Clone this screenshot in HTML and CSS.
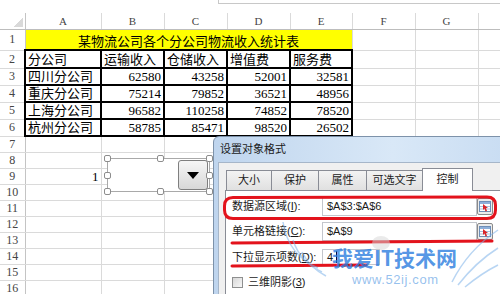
FILE: index.html
```html
<!DOCTYPE html>
<html lang="zh-CN">
<head>
    <meta charset="UTF-8" />
    <meta name="viewport" content="width=device-width, initial-scale=1.0" />
    <title>设置对象格式 - 控制</title>
    <link rel="stylesheet" href="styles.css">
</head>
<body>
<div class="page">
    <!-- FORMULA BAR EDGE -->
    <div class="topbar"><div class="fx-edge"></div></div>

    <!-- WORKSHEET -->
    <table class="grid">
        <colgroup>
            <col class="w-hd"><col class="w-a"><col class="w-n"><col class="w-n"><col class="w-n">
            <col class="w-e"><col class="w-n"><col class="w-n"><col class="w-n">
        </colgroup>
        <tr class="hd">
            <th class="corner"></th><th>A</th><th>B</th><th>C</th><th>D</th><th>E</th><th>F</th><th>G</th><th></th>
        </tr>
        <tr class="h21">
            <th>1</th><td colspan="5" class="title">某物流公司各个分公司物流收入统计表</td><td></td><td></td><td></td>
        </tr>
        <tr class="h18">
            <th>2</th><td class="t">分公司</td><td class="t">运输收入</td><td class="t">仓储收入</td><td class="t">增值费</td><td class="t">服务费</td><td></td><td></td><td></td>
        </tr>
        <tr class="h17">
            <th>3</th><td class="t">四川分公司</td><td class="t num">62580</td><td class="t num">43258</td><td class="t num">52001</td><td class="t num">32581</td><td></td><td></td><td></td>
        </tr>
        <tr class="h16">
            <th>4</th><td class="t">重庆分公司</td><td class="t num">75214</td><td class="t num">79852</td><td class="t num">36521</td><td class="t num">48956</td><td></td><td></td><td></td>
        </tr>
        <tr class="h17">
            <th>5</th><td class="t">上海分公司</td><td class="t num">96582</td><td class="t num">110258</td><td class="t num">74852</td><td class="t num">78520</td><td></td><td></td><td></td>
        </tr>
        <tr class="h16">
            <th>6</th><td class="t">杭州分公司</td><td class="t num">58785</td><td class="t num">85471</td><td class="t num">98520</td><td class="t num">26502</td><td></td><td></td><td></td>
        </tr>
        <tr class="h16"><th>7</th><td></td><td></td><td></td><td></td><td></td><td></td><td></td><td></td></tr>
        <tr class="h16"><th>8</th><td></td><td></td><td></td><td></td><td></td><td></td><td></td><td></td></tr>
        <tr class="h16"><th>9</th><td class="num">1</td><td></td><td></td><td></td><td></td><td></td><td></td><td></td></tr>
        <tr class="h16"><th>10</th><td></td><td></td><td></td><td></td><td></td><td></td><td></td><td></td></tr>
        <tr class="h16"><th>11</th><td></td><td></td><td></td><td></td><td></td><td></td><td></td><td></td></tr>
        <tr class="h16"><th>12</th><td></td><td></td><td></td><td></td><td></td><td></td><td></td><td></td></tr>
        <tr class="h16"><th>13</th><td></td><td></td><td></td><td></td><td></td><td></td><td></td><td></td></tr>
        <tr class="h16"><th>14</th><td></td><td></td><td></td><td></td><td></td><td></td><td></td><td></td></tr>
        <tr class="h16"><th>15</th><td></td><td></td><td></td><td></td><td></td><td></td><td></td><td></td></tr>
        <tr class="h16"><th>16</th><td></td><td></td><td></td><td></td><td></td><td></td><td></td><td></td></tr>
    </table>

    <!-- COMBO BOX FORM CONTROL (selected) -->
    <div class="combo">
        <span class="handle h-tl"></span><span class="handle h-tm"></span><span class="handle h-tr"></span>
        <span class="handle h-ml"></span><span class="handle h-mr"></span>
        <span class="handle h-bl"></span><span class="handle h-bm"></span><span class="handle h-br"></span>
        <div class="drop"><span class="tri"></span></div>
    </div>

    <!-- FORMAT CONTROL DIALOG -->
    <div class="dialog">
        <div class="dlg-title">设置对象格式</div>
        <div class="dlg-body">
            <div class="tabs">
                <div class="tab t-size">大小</div>
                <div class="tab t-prot">保护</div>
                <div class="tab t-attr">属性</div>
                <div class="tab t-alt">可选文字</div>
                <div class="tab t-ctrl on">控制</div>
            </div>
            <div class="panel">
                <div class="field f1">
                    <span class="lbl">数据源区域(<u>I</u>):</span>
                    <div class="input wide">$A$3:$A$6</div>
                    <div class="refbtn">
                        <svg width="16" height="17" viewBox="0 0 16 17">
                            <rect x="0.5" y="0.5" width="15" height="16" rx="1.5" fill="#ececec" stroke="#8a8a8a"/>
                            <rect x="2.5" y="3.5" width="11" height="10" fill="#fff" stroke="#6f8fb8"/>
                            <rect x="3" y="4" width="10" height="2" fill="#8fb0da"/>
                            <path d="M3 8.5h10M3 11h10" stroke="#a9c0de"/>
                            <path d="M6 6l5 4h-2l1 3-1.5.6-1-3-1.5 1.4z" fill="#d9262b"/>
                        </svg>
                    </div>
                </div>
                <div class="field f2">
                    <span class="lbl">单元格链接(<u>C</u>):</span>
                    <div class="input wide">$A$9</div>
                    <div class="refbtn">
                        <svg width="16" height="17" viewBox="0 0 16 17">
                            <rect x="0.5" y="0.5" width="15" height="16" rx="1.5" fill="#ececec" stroke="#8a8a8a"/>
                            <rect x="2.5" y="3.5" width="11" height="10" fill="#fff" stroke="#6f8fb8"/>
                            <rect x="3" y="4" width="10" height="2" fill="#8fb0da"/>
                            <path d="M3 8.5h10M3 11h10" stroke="#a9c0de"/>
                            <path d="M6 6l5 4h-2l1 3-1.5.6-1-3-1.5 1.4z" fill="#d9262b"/>
                        </svg>
                    </div>
                </div>
                <div class="field f3">
                    <span class="lbl">下拉显示项数(<u>D</u>):</span>
                    <div class="input short">4<span class="caret"></span></div>
                </div>
                <div class="check"><span class="cb"></span>三维阴影(<u>3</u>)</div>
            </div>
        </div>
    </div>

    <!-- RED HAND-DRAWN MARKS AND WATERMARK WINGS -->
    <svg class="marks" width="500" height="294" viewBox="0 0 500 294">
        <g fill="none" stroke="#e3131c" stroke-width="3" stroke-linecap="round">
            <path d="M233 197.5 L487 197 Q495.5 197 495.5 205 L495.5 210 Q495.5 218.5 487 218.5 L233 218.5 Q224.5 218.5 224.5 210 L224.5 206 Q224.5 197.5 233 197.5 Z"/>
            <path d="M232 243 Q360 242.5 492 241"/>
            <path d="M232 266 Q300 265.5 366 265"/>
        </g>
        <g fill="none" stroke="#7fb4ea" stroke-width="1.5" opacity="0.55">
            <path d="M283 222 Q288 255 318 268"/>
            <path d="M293 240 Q300 262 322 272"/>
            <path d="M302 252 Q310 268 326 276"/>
            <path d="M452 282 Q468 250 498 230"/>
            <path d="M458 285 Q476 262 498 248"/>
            <path d="M465 287 Q482 273 498 265"/>
        </g>
        <ellipse cx="381" cy="243" rx="9" ry="7" fill="#d6d6d6" opacity="0.5"/>
    </svg>
    <div class="wm-title">我爱IT技术网</div>
    <div class="wm-url">www.52ij.com</div>
</div>
</body>
</html>
```

FILE: styles.css
```css
* {
box-sizing: border-box;
}

html,
body {
margin: 0;
padding: 0;
}

body {
background-color: #fff;
font-family: "Liberation Serif", "Noto Sans CJK SC", serif;
}

.page {
position: relative;
width: 500px;
height: 294px;
overflow: hidden;
}

/* FORMULA BAR EDGE */
.topbar {
height: 13px;
}

.fx-edge {
margin-left: 218px;
height: 4px;
border-left: 1px solid #c8c8c8;
border-bottom: 1px solid #c8c8c8;
}

/* WORKSHEET GRID */
.grid {
border-collapse: collapse;
table-layout: fixed;
width: 541px;
font-size: 13px;
}

.w-hd { width: 25px; }
.w-a { width: 76px; }
.w-n { width: 63px; }
.w-e { width: 62px; }

.hd { height: 16px; }
.h21 { height: 21px; }
.h18 { height: 18px; }
.h17 { height: 17px; }
.h16 { height: 16px; }

.grid td,
.grid th {
border: 1px solid #dadada;
overflow: hidden;
white-space: nowrap;
}

.grid td {
padding: 0 2px;
vertical-align: bottom;
line-height: 15px;
color: #000;
}

.grid th {
padding: 0;
font-weight: normal;
font-size: 12px;
color: #444;
text-align: center;
vertical-align: middle;
}

.hd th {
border-top: none;
border-bottom-color: #bdbdbd;
font-size: 11px;
line-height: 14px;
}

.grid tr > th:first-child {
border-left: none;
border-right-color: #c4c4c4;
}

.corner {
background: linear-gradient(to top left, #d9d9d9 50%, transparent 50%) no-repeat right 2px bottom 2px / 9px 9px;
}

.title {
background-color: #ffff00;
text-align: center;
border-right: 2px solid #000;
border-bottom: 2px solid #000;
}

.t {
border: 2px solid #000 !important;
}

.num {
text-align: right;
}

/* COMBO BOX CONTROL */
.combo {
position: absolute;
left: 107px;
top: 158px;
width: 103px;
height: 34px;
padding: 1px 1px 1px 0;
border: 1px solid #a9a9a9;
background-color: #fff;
display: flex;
justify-content: flex-end;
}

.handle {
position: absolute;
width: 7px;
height: 7px;
border: 1px solid #8d8d8d;
border-radius: 2px;
background-color: #fff;
}

.h-tl { left: -4px; top: -4px; }
.h-tm { left: 49px; top: -4px; }
.h-tr { right: -4px; top: -4px; }
.h-ml { left: -4px; top: 13px; }
.h-mr { right: -4px; top: 13px; }
.h-bl { left: -4px; bottom: -4px; }
.h-bm { left: 49px; bottom: -4px; }
.h-br { right: -4px; bottom: -4px; }

.drop {
width: 30px;
border: 1px solid #7f7f7f;
border-radius: 3px;
background: linear-gradient(#f6f6f6, #d8d8d8);
display: flex;
align-items: center;
justify-content: center;
}

.tri {
width: 0;
height: 0;
border-left: 6.5px solid transparent;
border-right: 6.5px solid transparent;
border-top: 7px solid #000;
}

/* DIALOG */
.dialog {
position: absolute;
left: 213px;
top: 136px;
width: 300px;
height: 170px;
padding-left: 4px;
border: 1px solid #7d92aa;
border-radius: 6px 6px 0 0;
background: linear-gradient(to right, #bfd5ee, #d9e8f7 60%, #c8dcf2);
display: flex;
flex-direction: column;
font-family: "Liberation Sans", "Noto Sans CJK SC", sans-serif;
font-size: 11px;
color: #1a1a1a;
}

.dlg-title {
height: 25px;
line-height: 25px;
padding-left: 2px;
}

.dlg-body {
flex: 1;
padding: 5px 0 0 6px;
border: 1px solid #a6b6c9;
background-color: #f0f0f0;
}

.tabs {
height: 22px;
margin-left: 1px;
display: flex;
align-items: flex-end;
}

.tab {
height: 20px;
line-height: 18px;
margin-right: -1px;
border: 1px solid #898c95;
border-bottom: none;
background: linear-gradient(#f3f3f3, #e0e0e0);
text-align: center;
}

.t-size { width: 46px; }
.t-prot { width: 48px; }
.t-attr { width: 49px; }
.t-alt { width: 57px; }
.t-ctrl { width: 51px; }

.tab.on {
position: relative;
z-index: 1;
height: 23px;
margin-bottom: -1px;
line-height: 21px;
background: #fff;
}

.panel {
height: 120px;
padding: 6px 0 0 6px;
border: 1px solid #898c95;
background-color: #fff;
}

.field {
display: flex;
align-items: center;
height: 19px;
}

.f1 { margin-bottom: 6px; }
.f2 { margin-bottom: 8px; }
.f3 { height: 16px; margin-bottom: 10px; }

.lbl {
width: 90px;
line-height: 15px;
}

.input {
height: 19px;
padding-left: 4px;
border: 1px solid #c3c6cc;
background-color: #fff;
line-height: 17px;
}

.input.wide { width: 155px; }

.input.short {
width: 58px;
height: 16px;
line-height: 14px;
}

.caret {
display: inline-block;
width: 1px;
height: 12px;
margin-left: 3px;
vertical-align: -2px;
background-color: #000;
}

.refbtn {
width: 16px;
height: 17px;
}

.refbtn svg {
display: block;
}

.check {
display: flex;
align-items: center;
line-height: 15px;
}

.cb {
width: 11px;
height: 11px;
margin-right: 5px;
border: 1px solid #8e8f8f;
background: linear-gradient(135deg, #d8d8d8, #f7f7f7);
}

/* OVERLAYS */
.marks {
position: absolute;
left: 0;
top: 0;
z-index: 5;
pointer-events: none;
}

.wm-title {
position: absolute;
left: 332px;
top: 246px;
z-index: 6;
font-family: "Noto Sans CJK SC", sans-serif;
font-weight: bold;
font-size: 21px;
line-height: 22px;
color: rgba(40, 122, 222, 0.8);
pointer-events: none;
}

.wm-url {
position: absolute;
left: 352px;
top: 273px;
z-index: 6;
font-family: "Liberation Sans", sans-serif;
font-size: 13px;
line-height: 14px;
letter-spacing: 0.6px;
color: rgba(80, 150, 225, 0.6);
pointer-events: none;
}
```
